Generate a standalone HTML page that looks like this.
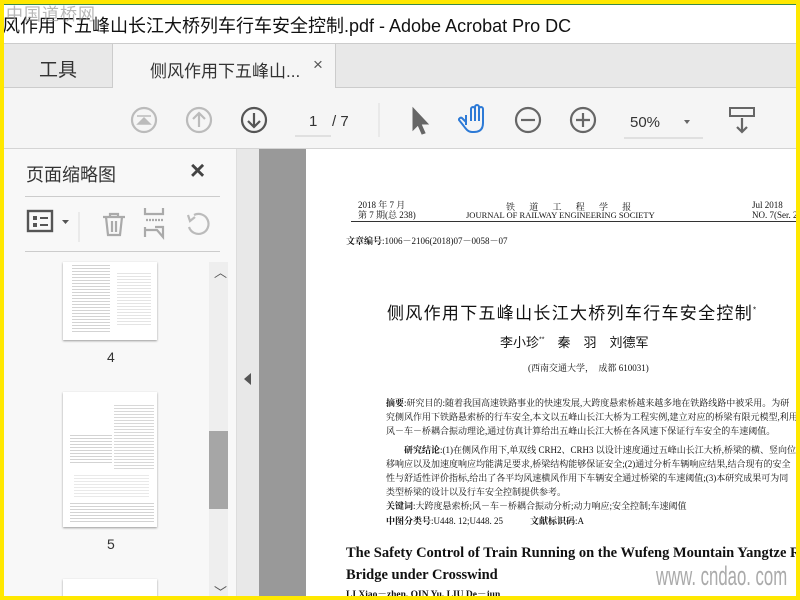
<!DOCTYPE html>
<html><head><meta charset="utf-8"><style>
*{margin:0;padding:0;box-sizing:border-box}
body{width:800px;height:600px;overflow:hidden;background:#ffe800;font-family:"Liberation Sans","Noto Sans CJK SC",sans-serif;position:relative}
.a{position:absolute}
.cn{font-family:"Liberation Sans","Noto Sans CJK SC",sans-serif}
.se{font-family:"Liberation Serif","Noto Serif CJK SC",serif}
.lines{background:repeating-linear-gradient(#fff 0 1px,#c8c8c8 1px 2px,#fff 2px 3px)}
</style></head><body>
<div class="a" style="left:4px;top:4px;width:792px;height:592px;background:#fff;overflow:hidden">
 <div class="a" style="left:0;top:0;width:792px;height:1px;background:#3a8a4a"></div>
 <div class="a" style="left:-2px;top:8px;font-size:18px;color:#111;white-space:nowrap">风作用下五峰山长江大桥列车行车安全控制.pdf - Adobe Acrobat Pro DC</div>
 <div class="a" style="left:2px;top:-4px;font-size:17px;color:#999;letter-spacing:1px;opacity:.7">中国道桥网</div>
 <div class="a" style="left:0;top:39px;width:792px;height:45px;background:#e8e8e8;border-top:1px solid #ccc;border-bottom:1px solid #ccc"></div>
 <div class="a" style="left:35px;top:51px;font-size:19px;color:#333">工具</div>
 <div class="a" style="left:108px;top:40px;width:224px;height:44px;background:#f5f5f5;border-left:1px solid #ccc;border-right:1px solid #ccc"></div>
 <div class="a" style="left:146px;top:53px;font-size:17px;color:#333">侧风作用下五峰山...</div>
 <div class="a" style="left:309px;top:51px;font-size:17px;color:#555">×</div>
 <div class="a" style="left:0;top:84px;width:792px;height:61px;background:#f5f5f5;border-bottom:1px solid #d4d4d4"></div>
 <svg class="a" style="left:0;top:84px" width="792" height="61">
  <g fill="none" stroke-width="2.2">
   <circle cx="140" cy="32" r="12" stroke="#bbb"/><path d="M133 28h14M134 36l6-6 6 6z" stroke="#bbb" fill="#bbb" stroke-width="1.5"/>
   <circle cx="195" cy="32" r="12" stroke="#bbb"/><path d="M195 39V25M189 31l6-6 6 6" stroke="#bbb"/>
   <circle cx="250" cy="32" r="12" stroke="#555"/><path d="M250 25v14M244 33l6 6 6-6" stroke="#555"/>
   <path d="M291 48h36" stroke="#ccc" stroke-width="1"/>
   <path d="M375 15v34" stroke="#ddd" stroke-width="1"/>
   <path d="M409 20v22l5-5 4 9 3-1-4-9h7z" fill="#666" stroke="#666" stroke-width="1"/>
   <path d="M462 37v-10M467 33v-12a2 2 0 014 0v12M471 33v-14a2 2 0 014 0v14M475 33v-12a2 2 0 014 0v14c0 6-3 9-9 9h-2c-4 0-6-3-9-7l-4-5a2 2 0 013-2l4 4" stroke="#2d7ad6" stroke-width="2"/>
   <circle cx="524" cy="32" r="12" stroke="#666"/><path d="M517 32h14" stroke="#666"/>
   <circle cx="579" cy="32" r="12" stroke="#666"/><path d="M572 32h14M579 25v14" stroke="#666"/>
   <path d="M620 50h79" stroke="#ccc" stroke-width="1"/>
   <path d="M680 32h6l-3 4z" fill="#666" stroke="none"/>
   <rect x="726" y="20" width="24" height="8" stroke="#666" stroke-width="2"/>
   <path d="M738 30v14M733 39l5 5 5-5" stroke="#666"/>
  </g>
  <text x="305" y="38" font-size="15" fill="#333" font-family="Liberation Sans">1</text>
  <text x="328" y="38" font-size="15" fill="#333" font-family="Liberation Sans">/ 7</text>
  <text x="626" y="39" font-size="15" fill="#333" font-family="Liberation Sans">50%</text>
 </svg>
 <div class="a" style="left:0;top:145px;width:232px;height:447px;background:#f8f8f8"></div>
 <div class="a" style="left:22px;top:157px;font-size:18px;color:#333">页面缩略图</div>
 <div class="a" style="left:186px;top:151px;font-size:26px;color:#444;font-weight:bold">×</div>
 <div class="a" style="left:21px;top:192px;width:195px;height:1px;background:#ccc"></div>
 <div class="a" style="left:21px;top:247px;width:195px;height:1px;background:#ccc"></div>
 <svg class="a" style="left:0;top:195px" width="232" height="52">
  <rect x="24" y="12" width="24" height="20" fill="none" stroke="#555" stroke-width="2.4"/>
  <rect x="29" y="17" width="4" height="4" fill="#555"/><rect x="29" y="24" width="4" height="4" fill="#555"/>
  <path d="M36 19h8M36 26h8" stroke="#555" stroke-width="2"/>
  <path d="M58 21h7l-3.5 4z" fill="#555"/>
  <path d="M75 13v30" stroke="#ddd"/>
  <g stroke="#aaa" fill="none" stroke-width="2.2"><path d="M99 18h22M106 18v-3h8v3M102 18l2 18h12l2-18M108 22v11M112 22v11"/>
  <path d="M141 9v6h18v-6M141 28v10M151 28h8v10l-6-7h-12"/><path d="M142 21h17" stroke-dasharray="2 1"/>
  <path d="M190 16a10 10 0 11-5 12M184 16l2 6 5-4" stroke="#bbb"/></g>
 </svg>
 <div class="a" style="left:205px;top:258px;width:19px;height:334px;background:#eee"></div>
 <div class="a" style="left:205px;top:427px;width:19px;height:78px;background:#a6a6a6"></div>
 <div class="a" style="left:210px;top:258px;font-size:13px;color:#555">︿</div>
 <div class="a" style="left:210px;top:578px;font-size:13px;color:#555">﹀</div>
 <div class="a" style="left:59px;top:258px;width:94px;height:78px;background:#fff;box-shadow:0 1px 2px #999"></div>
 <div class="a lines" style="left:68px;top:260px;width:38px;height:70px;opacity:.8"></div>
 <div class="a lines" style="left:113px;top:268px;width:34px;height:55px;opacity:.5"></div>
 <div class="a" style="left:103px;top:345px;font-size:14px;color:#333">4</div>
 <div class="a" style="left:59px;top:388px;width:94px;height:135px;background:#fff;box-shadow:0 1px 2px #999"></div>
 <div class="a lines" style="left:66px;top:430px;width:42px;height:30px;opacity:.8"></div>
 <div class="a lines" style="left:110px;top:400px;width:40px;height:65px;opacity:.7"></div>
 <div class="a lines" style="left:70px;top:470px;width:75px;height:25px;opacity:.4"></div>
 <div class="a lines" style="left:66px;top:498px;width:84px;height:20px;opacity:.8"></div>
 <div class="a" style="left:103px;top:532px;font-size:14px;color:#333">5</div>
 <div class="a" style="left:59px;top:575px;width:94px;height:20px;background:#fff;box-shadow:0 1px 2px #999"></div>
 <div class="a" style="left:232px;top:145px;width:23px;height:447px;background:#e8e8e8;border-left:1px solid #ddd"></div>
 <div class="a" style="left:240px;top:369px;width:0;height:0;border-top:6px solid transparent;border-bottom:6px solid transparent;border-right:7px solid #555"></div>
 <div class="a" style="left:255px;top:145px;width:47px;height:447px;background:#999"></div>
 <div class="a se" style="left:302px;top:145px;width:490px;height:447px;background:#fff;color:#111;overflow:hidden">
  <div class="a" style="left:52px;top:51px;font-size:9px;line-height:10px">2018 年 7 月<br>第 7 期(总 238)</div>
  <div class="a" style="left:200px;top:51px;font-size:9px;letter-spacing:6px">铁 道 工 程 学 报</div>
  <div class="a" style="left:160px;top:61px;font-size:8.5px">JOURNAL OF RAILWAY ENGINEERING SOCIETY</div>
  <div class="a" style="left:446px;top:51px;font-size:9px;line-height:10px;white-space:nowrap">Jul 2018<br>NO. 7(Ser. 23</div>
  <div class="a" style="left:45px;top:72px;width:450px;height:1px;background:#333"></div>
  <div class="a" style="left:40px;top:85px;font-size:9px"><b>文章编号</b>:1006－2106(2018)07－0058－07</div>
  <div class="a cn" style="left:81px;top:150px;font-size:17px;letter-spacing:1.3px;white-space:nowrap">侧风作用下五峰山长江大桥列车行车安全控制<sup style="font-size:8px">*</sup></div>
  <div class="a cn" style="left:194px;top:183px;font-size:13px;white-space:nowrap">李小珍<sup style="font-size:7px">**</sup>　秦　羽　刘德军</div>
  <div class="a" style="left:222px;top:212px;font-size:9px;white-space:nowrap">(西南交通大学，　成都 610031)</div>
  <div class="a" style="left:80px;top:247px;width:440px;font-size:9px;line-height:14.2px;white-space:nowrap">
  <b>摘要</b>:研究目的:随着我国高速铁路事业的快速发展,大跨度悬索桥越来越多地在铁路线路中被采用。为研<br>究侧风作用下铁路悬索桥的行车安全,本文以五峰山长江大桥为工程实例,建立对应的桥梁有限元模型,利用<br>风－车－桥耦合振动理论,通过仿真计算给出五峰山长江大桥在各风速下保证行车安全的车速阈值。<br><div style="height:4px"></div>　　<b>研究结论</b>:(1)在侧风作用下,单双线 CRH2、CRH3 以设计速度通过五峰山长江大桥,桥梁的横、竖向位<br>移响应以及加速度响应均能满足要求,桥梁结构能够保证安全;(2)通过分析车辆响应结果,结合现有的安全<br>性与舒适性评价指标,给出了各平均风速横风作用下车辆安全通过桥梁的车速阈值;(3)本研究成果可为同<br>类型桥梁的设计以及行车安全控制提供参考。<br><b>关键词</b>:大跨度悬索桥;风－车－桥耦合振动分析;动力响应;安全控制;车速阈值<br><b>中图分类号</b>:U448. 12;U448. 25　　　<b>文献标识码</b>:A</div>
  <div class="a" style="left:40px;top:393px;font-size:14.5px;font-weight:bold;line-height:22px;white-space:nowrap">The Safety Control of Train Running on the Wufeng Mountain Yangtze R<br>Bridge under Crosswind</div>
  <div class="a" style="left:40px;top:437px;font-size:9.5px;font-weight:bold;white-space:nowrap">LI Xiao－zhen, QIN Yu, LIU De－jun</div>
  <div class="a" style="left:350px;top:412px;font-size:27px;color:#aaa;font-family:'Liberation Sans Narrow','Liberation Sans',sans-serif;transform:scaleX(.62);transform-origin:left;white-space:nowrap">www. cndao. com</div>
 </div>
</div>
</body></html>
